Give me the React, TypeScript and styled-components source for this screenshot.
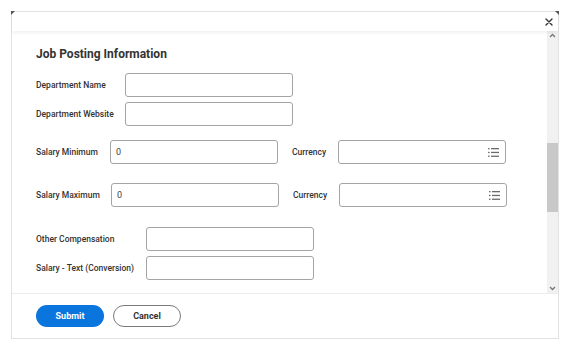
import React from 'react';
import styled, { createGlobalStyle } from 'styled-components';

const GlobalStyle = createGlobalStyle`
  html, body {
    margin: 0;
    padding: 0;
    background: #ffffff;
    font-family: Roboto, "Liberation Sans", Arial, sans-serif;
  }
  * { box-sizing: border-box; }
`;

type Field = { label: string; value?: string; list?: boolean };

type Row = {
  labelWidth: number;
  main: Field;
  side?: Field;
  gapTop: number;
};

const rows: Row[] = [
  { labelWidth: 89, main: { label: 'Department Name' }, gapTop: 0 },
  { labelWidth: 89, main: { label: 'Department Website' }, gapTop: 5 },
  { labelWidth: 74, main: { label: 'Salary Minimum', value: '0' }, side: { label: 'Currency', list: true }, gapTop: 14 },
  { labelWidth: 75, main: { label: 'Salary Maximum', value: '0' }, side: { label: 'Currency', list: true }, gapTop: 19 },
  { labelWidth: 110, main: { label: 'Other Compensation' }, gapTop: 20 },
  { labelWidth: 110, main: { label: 'Salary - Text (Conversion)' }, gapTop: 5 },
];

function ListIcon() {
  return (
    <svg width="11" height="9" viewBox="0 0 11 9">
      <g fill="#6b6b6b">
        <rect x="0" y="0" width="1.5" height="1.3" />
        <rect x="3" y="0" width="8" height="1.3" />
        <rect x="0" y="3.8" width="1.5" height="1.3" />
        <rect x="3" y="3.8" width="8" height="1.3" />
        <rect x="0" y="7.6" width="1.5" height="1.3" />
        <rect x="3" y="7.6" width="8" height="1.3" />
      </g>
    </svg>
  );
}

function App() {
  return (
    <>
      <GlobalStyle />
      <Page>
        <Dialog>
          <Header>
            <CloseButton aria-label="Close">
              <svg width="8" height="8" viewBox="0 0 8 8">
                <path d="M1 1 L7 7 M7 1 L1 7" stroke="#333" strokeWidth="1.4" strokeLinecap="round" />
              </svg>
            </CloseButton>
          </Header>
          <Body>
            <Content>
              <Title>Job Posting Information</Title>
              {rows.map((row, i) => (
                <FormRow key={i} $gapTop={row.gapTop}>
                  <Label $width={row.labelWidth}>{row.main.label}</Label>
                  <Input>{row.main.value}</Input>
                  {row.side && (
                    <>
                      <SideLabel>{row.side.label}</SideLabel>
                      <Input>
                        <span>{row.side.value}</span>
                        {row.side.list && <ListIcon />}
                      </Input>
                    </>
                  )}
                </FormRow>
              ))}
            </Content>
            <Scrollbar>
              <Arrow>
                <svg width="7" height="5" viewBox="0 0 7 5"><path d="M1 4 L3.5 1.5 L6 4" stroke="#777" strokeWidth="1.3" fill="none" /></svg>
              </Arrow>
              <Track $size={103} />
              <Thumb />
              <Track $size={72} />
              <Arrow>
                <svg width="7" height="5" viewBox="0 0 7 5"><path d="M1 1 L3.5 3.5 L6 1" stroke="#777" strokeWidth="1.3" fill="none" /></svg>
              </Arrow>
            </Scrollbar>
          </Body>
          <Footer>
            <PrimaryButton>Submit</PrimaryButton>
            <SecondaryButton>Cancel</SecondaryButton>
          </Footer>
        </Dialog>
      </Page>
    </>
  );
}

export default App;

const Page = styled.div`
  width: 573px;
  height: 349px;
  padding: 11px 14px 10px 11px;
`;

const Dialog = styled.div`
  position: relative;
  width: 548px;
  height: 328px;
  border: 1px solid #e2e2e2;
  display: flex;
  flex-direction: column;
  background: #fff;

  &::before,
  &::after {
    content: '';
    position: absolute;
    top: -1px;
    width: 0;
    height: 0;
    border-style: solid;
  }
  &::before {
    left: -1px;
    border-width: 4px 4px 0 0;
    border-color: #555 transparent transparent transparent;
  }
  &::after {
    right: -1px;
    border-width: 0 4px 4px 0;
    border-color: transparent #555 transparent transparent;
  }
`;

const Header = styled.div`
  height: 19px;
  display: flex;
  justify-content: flex-end;
  align-items: center;
  padding-right: 4px;
  box-shadow: 0 2px 3px rgba(0, 0, 0, 0.06);
  position: relative;
  z-index: 1;
`;

const CloseButton = styled.button`
  border: none;
  background: none;
  padding: 0;
  width: 10px;
  height: 10px;
  display: flex;
  align-items: center;
  justify-content: center;
  cursor: pointer;
`;

const Body = styled.div`
  flex: 1;
  display: flex;
  min-height: 0;
  border-bottom: 1px solid #ececec;
`;

const Content = styled.div`
  flex: 1;
  padding: 15px 0 0 24px;
  overflow: hidden;
`;

const Title = styled.h2`
  margin: 0 0 11px;
  font-size: 12px;
  line-height: 16px;
  font-weight: 700;
  color: #333;
`;

const FormRow = styled.div<{ $gapTop: number }>`
  display: flex;
  align-items: center;
  margin-top: ${(p) => p.$gapTop}px;
`;

const Label = styled.label<{ $width: number }>`
  width: ${(p) => p.$width}px;
  flex-shrink: 0;
  font-size: 8.5px;
  font-weight: 500;
  color: #333;
  white-space: nowrap;
`;

const SideLabel = styled.label`
  width: 46px;
  margin-left: 14px;
  font-size: 8.5px;
  font-weight: 500;
  color: #333;
`;

const Input = styled.div`
  width: 168px;
  height: 24px;
  border: 1px solid #a4a4a4;
  border-radius: 3px;
  display: flex;
  align-items: center;
  justify-content: space-between;
  padding: 0 6px 0 5px;
  font-size: 9px;
  color: #444;
`;

const Scrollbar = styled.div`
  width: 11px;
  background: #f1f1f1;
  display: flex;
  flex-direction: column;
`;

const Arrow = styled.div`
  height: 9px;
  display: flex;
  align-items: center;
  justify-content: center;
`;

const Track = styled.div<{ $size: number }>`
  height: ${(p) => p.$size}px;
`;

const Thumb = styled.div`
  height: 70px;
  background: #c8c8c8;
`;

const Footer = styled.div`
  height: 44px;
  display: flex;
  align-items: center;
  gap: 9px;
  padding: 0 24px;
`;

const PrimaryButton = styled.button`
  width: 68px;
  height: 22px;
  border: none;
  border-radius: 11px;
  background: #0b75de;
  color: #fff;
  font-family: inherit;
  font-size: 9px;
  font-weight: 700;
`;

const SecondaryButton = styled.button`
  width: 68px;
  height: 22px;
  border: 1px solid #7a7a7a;
  border-radius: 11px;
  background: #fff;
  color: #333;
  font-family: inherit;
  font-size: 9px;
  font-weight: 700;
`;
